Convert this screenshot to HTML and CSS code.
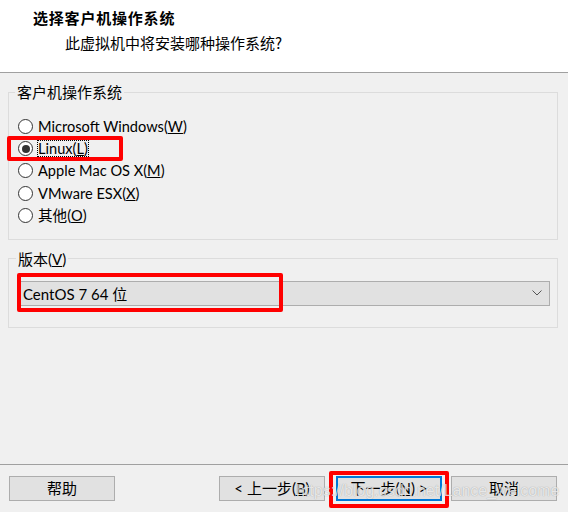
FILE: index.html
```html
<!DOCTYPE html>
<html lang="zh-CN">
<head>
<meta charset="utf-8">
<title>新建虚拟机向导</title>
<link rel="stylesheet" href="styles.css">
</head>
<body>
<div class="wizard">
  <div class="header">
    <div class="title">选择客户机操作系统</div>
    <div class="subtitle">此虚拟机中将安装哪种操作系统?</div>
  </div>
  <div class="main">
    <fieldset class="group group-os">
      <legend>客户机操作系统</legend>
      <div class="radio-list">
        <div class="radio-row"><span class="radio"></span><span class="label">Microsoft Windows(<u>W</u>)</span></div>
        <div class="radio-row marked"><span class="radio checked"></span><span class="label focused">Linux(<u>L</u>)</span><span class="red-mark mark-linux"></span></div>
        <div class="radio-row"><span class="radio"></span><span class="label">Apple Mac OS X(<u>M</u>)</span></div>
        <div class="radio-row"><span class="radio"></span><span class="label">VMware ESX(<u>X</u>)</span></div>
        <div class="radio-row"><span class="radio"></span><span class="label">其他(<u>O</u>)</span></div>
      </div>
    </fieldset>
    <fieldset class="group group-ver">
      <legend>版本(<u>V</u>)</legend>
      <div class="combo">
        <span class="combo-text">CentOS 7 64 位</span>
        <svg class="chevron" width="10" height="6" viewBox="0 0 10 6"><path d="M0.5 0.5 L5 5 L9.5 0.5" fill="none" stroke="#555" stroke-width="1"/></svg>
        <span class="red-mark mark-combo"></span>
      </div>
    </fieldset>
  </div>
  <div class="footer">
    <button class="btn">帮助</button>
    <div class="spacer"></div>
    <button class="btn">&lt; 上一步(<u>B</u>)</button>
    <button class="btn btn-default">下一步(<u>N</u>) &gt;<span class="red-mark mark-next"></span></button>
    <button class="btn">取消</button>
    <div class="watermark">https://blog.csdn.net/Lance_welcome</div>
  </div>
</div>
</body>
</html>
```

FILE: styles.css
```css
* { box-sizing: border-box; }
html, body { margin: 0; padding: 0; }
body {
  background: #f0f0f0;
  font-family: Lato, "Noto Sans CJK SC", sans-serif;
  font-size: 15px;
  color: #000;
}
.wizard {
  width: 568px;
  height: 512px;
  display: flex;
  flex-direction: column;
}
.header {
  background: #fff;
  height: 73px;
  border-bottom: 1px solid #a0a0a0;
  padding-top: 8px;
}
.title {
  padding-left: 33px;
  font-family: "Noto Sans CJK SC", sans-serif;
  font-weight: bold;
  font-size: 15px;
  letter-spacing: 0.8px;
  line-height: 20px;
}
.subtitle {
  padding-left: 65px;
  margin-top: 5px;
  font-family: "Noto Sans CJK SC", sans-serif;
  font-size: 15px;
  line-height: 20px;
}
.main {
  flex: 1;
  padding-top: 9px;
}
.group {
  margin: 0 0 9px 8px;
  width: 550px;
  border: 1px solid #dcdcdc;
  padding: 0;
  min-width: 0;
}
.group legend {
  margin-left: 6px;
  padding: 0 2px;
  line-height: 20px;
  height: 20px;
  font-size: 15px;
}
.group-ver legend {
  margin-left: 7px;
}
.radio-list {
  padding: 13px 0 12px 9px;
}
.radio-row {
  position: relative;
  height: 22.4px;
  display: flex;
  align-items: center;
}
.radio {
  width: 15px;
  height: 15px;
  border: 1px solid #333;
  border-radius: 50%;
  background: #fff;
  margin-right: 5px;
  display: flex;
  align-items: center;
  justify-content: center;
  flex: none;
}
.radio.checked::after {
  content: "";
  width: 8px;
  height: 8px;
  border-radius: 50%;
  background: #333;
}
.label {
  font-size: 14.6px;
  line-height: 15px;
  white-space: nowrap;
}
.label.focused {
  outline: 1px dotted #000;
  outline-offset: 0;
}
.red-mark {
  position: absolute;
  border: 4px solid #ff0000;
  border-radius: 2px;
  pointer-events: none;
}
.mark-linux {
  left: -11px;
  top: -1px;
  width: 116px;
  height: 25px;
}
.group-ver {
  padding: 12px 0 21px 0;
}
.combo {
  position: relative;
  height: 25px;
  margin: 0 7px 0 11px;
  background: #e1e1e1;
  border: 1px solid #adadad;
  display: flex;
  align-items: center;
  padding-left: 2px;
}
.combo-text {
  flex: 1;
  white-space: nowrap;
}
.chevron {
  margin-right: 7px;
}
.mark-combo {
  left: -4px;
  top: -9px;
  width: 266px;
  height: 39px;
}
.footer {
  position: relative;
  height: 48px;
  border-top: 1px solid #a0a0a0;
  display: flex;
  align-items: flex-start;
  padding: 11px 11px 0 9px;
  gap: 11px;
}
.spacer { flex: 1; }
.btn {
  position: relative;
  width: 106px;
  height: 25px;
  background: #e1e1e1;
  border: 1px solid #adadad;
  font-family: Lato, "Noto Sans CJK SC", sans-serif;
  font-size: 15px;
  color: #000;
  padding: 0;
  line-height: 21px;
}
.btn-default {
  border: 2px solid #0078d7;
  margin-right: -2px;
}
.mark-next {
  left: -9px;
  top: -7px;
  width: 120px;
  height: 37px;
}
.watermark {
  position: absolute;
  left: 296px;
  top: 17px;
  font-family: "Liberation Sans", sans-serif;
  font-size: 16px;
  color: rgba(255, 255, 255, 0.75);
  text-shadow: 0 0 1px rgba(0, 0, 0, 0.35);
  pointer-events: none;
  white-space: nowrap;
}
```
